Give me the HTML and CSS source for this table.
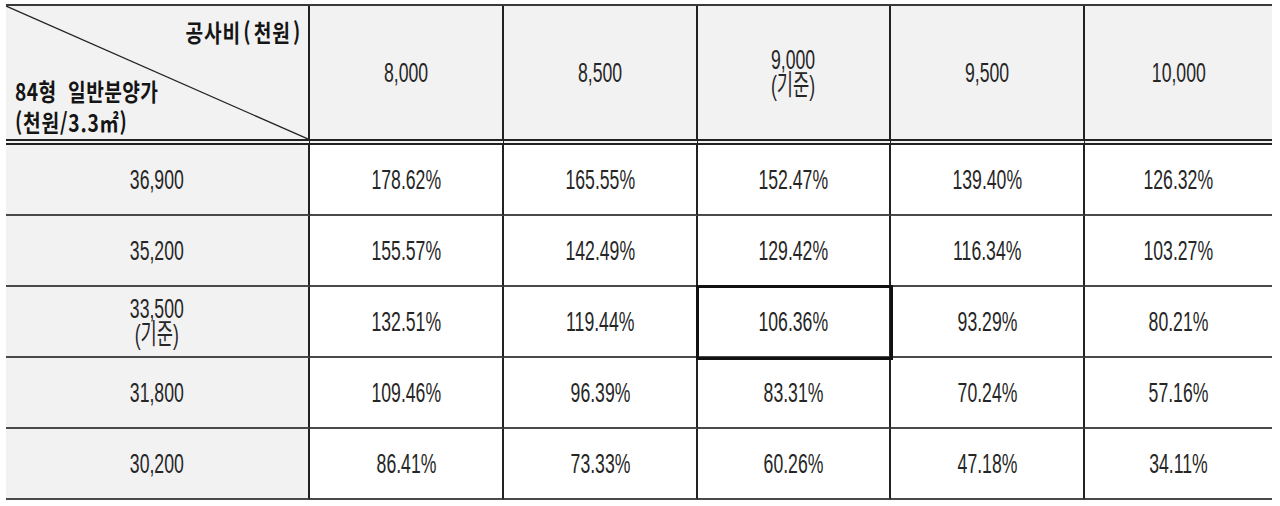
FILE: index.html
```html
<!DOCTYPE html>
<html lang="ko">
<head>
<meta charset="utf-8">
<link rel="stylesheet" href="styles.css">
</head>
<body>
<div class="grid">
  <div class="cell head corner">
    <svg class="diag" viewBox="0 0 100 100" preserveAspectRatio="none"><line x1="0" y1="0" x2="100" y2="100" vector-effect="non-scaling-stroke"/></svg>
    <div class="c-top"><span class="k">공사비<span class="p">(</span>천원<span class="p">)</span></span></div>
    <div class="c-bot"><span class="k">84형&nbsp; 일반분양가</span></div>
    <div class="c-bot2"><span class="k">(천원/3.3㎡)</span></div>
  </div>
  <div class="cell head"><span class="n">8,000</span></div>
  <div class="cell head"><span class="n">8,500</span></div>
  <div class="cell head"><span class="n">9,000<br>(기준)</span></div>
  <div class="cell head"><span class="n">9,500</span></div>
  <div class="cell head last"><span class="n">10,000</span></div>

  <div class="cell rh"><span class="n">36,900</span></div>
  <div class="cell"><span class="n">178.62%</span></div>
  <div class="cell"><span class="n">165.55%</span></div>
  <div class="cell"><span class="n">152.47%</span></div>
  <div class="cell"><span class="n">139.40%</span></div>
  <div class="cell last"><span class="n">126.32%</span></div>

  <div class="cell rh"><span class="n">35,200</span></div>
  <div class="cell"><span class="n">155.57%</span></div>
  <div class="cell"><span class="n">142.49%</span></div>
  <div class="cell"><span class="n">129.42%</span></div>
  <div class="cell"><span class="n">116.34%</span></div>
  <div class="cell last"><span class="n">103.27%</span></div>

  <div class="cell rh"><span class="n">33,500<br>(기준)</span></div>
  <div class="cell"><span class="n">132.51%</span></div>
  <div class="cell"><span class="n">119.44%</span></div>
  <div class="cell mark"><span class="n">106.36%</span></div>
  <div class="cell"><span class="n">93.29%</span></div>
  <div class="cell last"><span class="n">80.21%</span></div>

  <div class="cell rh"><span class="n">31,800</span></div>
  <div class="cell"><span class="n">109.46%</span></div>
  <div class="cell"><span class="n">96.39%</span></div>
  <div class="cell"><span class="n">83.31%</span></div>
  <div class="cell"><span class="n">70.24%</span></div>
  <div class="cell last"><span class="n">57.16%</span></div>

  <div class="cell rh"><span class="n">30,200</span></div>
  <div class="cell"><span class="n">86.41%</span></div>
  <div class="cell"><span class="n">73.33%</span></div>
  <div class="cell"><span class="n">60.26%</span></div>
  <div class="cell"><span class="n">47.18%</span></div>
  <div class="cell last"><span class="n">34.11%</span></div>
</div>
</body>
</html>
```

FILE: styles.css
```css
html, body {
  margin: 0;
  padding: 0;
  background: #ffffff;
}

body {
  font-family: "Liberation Sans", "Noto Sans CJK KR", sans-serif;
  color: #262626;
}

.grid {
  margin: 4px 0 0 6px;
  width: 1266px;
  display: grid;
  grid-template-columns: 304px 194px 194px 193px 194px 187px;
  grid-template-rows: 139px repeat(5, 71px);
  border-top: 2px solid #3a3a3a;
}

.cell {
  box-sizing: border-box;
  display: flex;
  align-items: center;
  justify-content: center;
  text-align: center;
  background: #ffffff;
  border-right: 2px solid #222;
  border-bottom: 2px solid #4a4a4a;
}

.cell.last {
  border-right: none;
}

.head {
  background: #f2f2f2;
  border-bottom: 6px double #222;
}

.rh {
  background: #f2f2f2;
}

.n {
  display: inline-block;
  font-family: "Liberation Sans", "Noto Sans CJK KR", sans-serif;
  font-size: 28px;
  line-height: 26px;
  transform: scaleX(0.63);
  color: #262626;
  white-space: nowrap;
}

.mark {
  position: relative;
  z-index: 2;
  outline: 3px solid #111;
  outline-offset: -1px;
}

.corner {
  position: relative;
  display: flex;
  flex-direction: column;
  align-items: stretch;
  justify-content: flex-start;
  text-align: left;
  font-family: "Noto Sans CJK KR", "Liberation Sans", sans-serif;
  font-weight: 700;
  font-size: 24px;
  color: #151515;
}

.diag {
  position: absolute;
  left: 0;
  top: 0;
  width: 100%;
  height: 100%;
}

.diag line {
  stroke: #222;
  stroke-width: 1.3;
}

.k {
  display: inline-block;
  white-space: nowrap;
  transform: scaleX(0.8);
  line-height: 24px;
}

.c-top {
  text-align: right;
  padding: 14px 4px 0 0;
  height: 24px;
  line-height: 24px;
  letter-spacing: 1px;
}

.c-top .k {
  transform-origin: right center;
}

.p {
  margin: 0 3px;
}

.c-bot,
.c-bot2 {
  padding-left: 9px;
  height: 28px;
  line-height: 24px;
}

.c-bot {
  margin-top: 35px;
  height: 31px;
  letter-spacing: 0.5px;
}

.c-bot2 {
  letter-spacing: 1px;
}

.c-bot .k,
.c-bot2 .k {
  transform-origin: left center;
}
```
